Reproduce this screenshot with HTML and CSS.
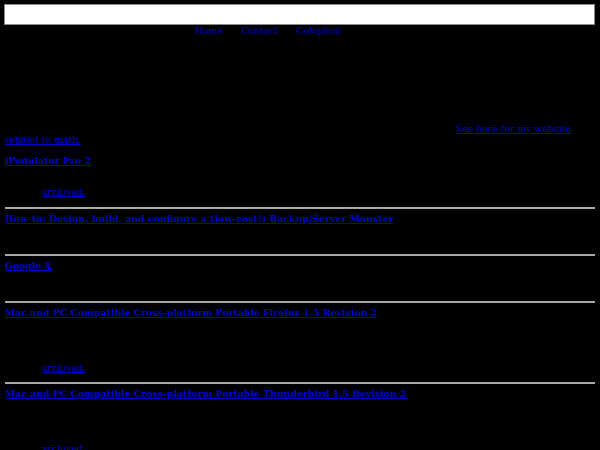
FILE: index.html
```html
<!DOCTYPE html>
<html>
<head>
<meta charset="utf-8">
<title>Projects</title>
<link rel="stylesheet" href="styles.css">
</head>
<body>
<div class="banner"></div>
<nav class="nav">
  <a href="#">Home</a>
  <a href="#">Contact</a>
  <a href="#">Colophon</a>
</nav>
<p class="intro"><a href="#">See here for my website related to math.</a></p>

<div class="entry first">
  <h2 class="title"><a href="#">iPodulator Pro 2</a></h2>
  <p class="desc tall"></p>
  <p class="arch"><a href="#">archived.</a></p>
</div>
<hr>
<div class="entry">
  <h2 class="title"><a href="#">How-to: Design, build, and configure a (low-cost!) Backup/Server Monster</a></h2>
  <p class="desc gap2"></p>
</div>
<hr>
<div class="entry">
  <h2 class="title"><a href="#">Google X</a></h2>
  <p class="desc gap2"></p>
</div>
<hr>
<div class="entry">
  <h2 class="title"><a href="#">Mac and PC Compatible Cross-platform Portable Firefox 1.5 Revision 2</a></h2>
  <p class="desc gap4"></p>
  <p class="arch"><a href="#">archived.</a></p>
</div>
<hr>
<div class="entry">
  <h2 class="title"><a href="#">Mac and PC Compatible Cross-platform Portable Thunderbird 1.5 Revision 2</a></h2>
  <p class="desc gap4"></p>
  <p class="arch"><a href="#">archived.</a></p>
</div>
</body>
</html>
```
FILE: styles.css
```css
html { background: #000; }
body {
  margin: 4px 5px 0 4px;
  background: #000;
  color: #000;
  font-family: "DejaVu Serif", serif;
  font-size: 9.35px;
  line-height: 11px;
}
a { color: #0000c8; }
.banner {
  height: 19px;
  background: #fff;
  border: 1px solid #8a8a8a;
}
.nav {
  display: flex;
  gap: 18px;
  padding-left: 191px;
  height: 12px;
  line-height: 12px;
}
.nav a { text-decoration: none; }
.intro {
  margin: 86px 0 0 1px;
  text-indent: 451px;
  padding-right: 20px;
}
.entry { margin-left: 1px; }
.title {
  font-size: 9.35px;
  line-height: 11px;
  font-weight: bold;
  margin: 4px 0 0;
}
.entry.first .title { margin-top: 10px; }
.desc { margin: 0; }
.tall { height: 20px; }
.gap2 { height: 30px; }
.gap4 { height: 44px; }
.arch {
  margin: 0;
  padding-left: 37px;
  height: 20px;
}
.entry.first .arch { height: 21px; }
hr {
  margin: 0 0 0 1px;
  border: 0;
  border-top: 2px solid #a8a8a8;
  height: 0;
}
```
